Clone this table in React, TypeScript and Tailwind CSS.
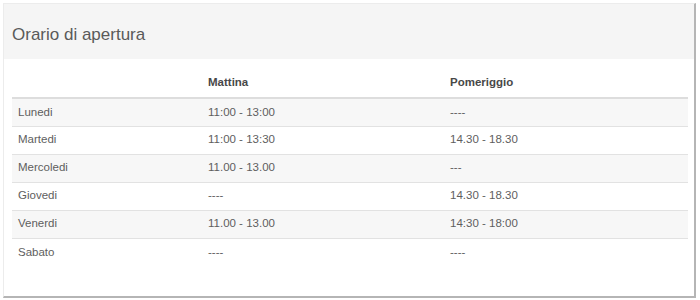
const rows = [
  { day: 'Lunedi', am: '11:00 - 13:00', pm: '----' },
  { day: 'Martedi', am: '11:00 - 13:30', pm: '14.30 - 18.30' },
  { day: 'Mercoledi', am: '11.00 - 13.00', pm: '---' },
  { day: 'Giovedi', am: '----', pm: '14.30 - 18.30' },
  { day: 'Venerdi', am: '11.00 - 13.00', pm: '14:30 - 18:00' },
  { day: 'Sabato', am: '----', pm: '----' },
];

export default function App() {
  return (
    <div className="w-[700px] h-[300px] bg-white p-[3px] font-['Liberation_Sans',Arial,sans-serif]">
      <div className="h-[295px] w-[693px] bg-white border-l border-t border-[#ececec] border-r-2 border-b-2 border-r-[#b5b5b5] border-b-[#b5b5b5] flex flex-col">
        {/* intestazione */}
        <div className="h-[55px] bg-[#f5f5f5] flex items-center px-[8px]">
          <h3 className="text-[17px] text-[#5a5a5a] pt-[7px]">Orario di apertura</h3>
        </div>

        <div className="px-[8px] pt-[10px]">
          <table className="w-[676px] text-[11.5px] text-[#5e5e5e] border-collapse">
            <thead>
              <tr className="border-b-2 border-[#dddddd]">
                <th className="w-[188px] h-[29px] px-[6px] text-left font-bold text-[#484848]"></th>
                <th className="w-[242px] h-[29px] px-[8px] text-left font-bold text-[#484848]">Mattina</th>
                <th className="h-[29px] px-[8px] text-left font-bold text-[#484848]">Pomeriggio</th>
              </tr>
            </thead>
            <tbody>
              {rows.map((r, i) => (
                <tr key={r.day} className={`border-t border-[#e2e2e2] ${i % 2 === 0 ? 'bg-[#f7f7f7]' : 'bg-white'}`}>
                  <td className="h-[28px] px-[6px]">{r.day}</td>
                  <td className="h-[28px] px-[8px]">{r.am}</td>
                  <td className="h-[28px] px-[8px]">{r.pm}</td>
                </tr>
              ))}
            </tbody>
          </table>
        </div>
      </div>
    </div>
  );
}
